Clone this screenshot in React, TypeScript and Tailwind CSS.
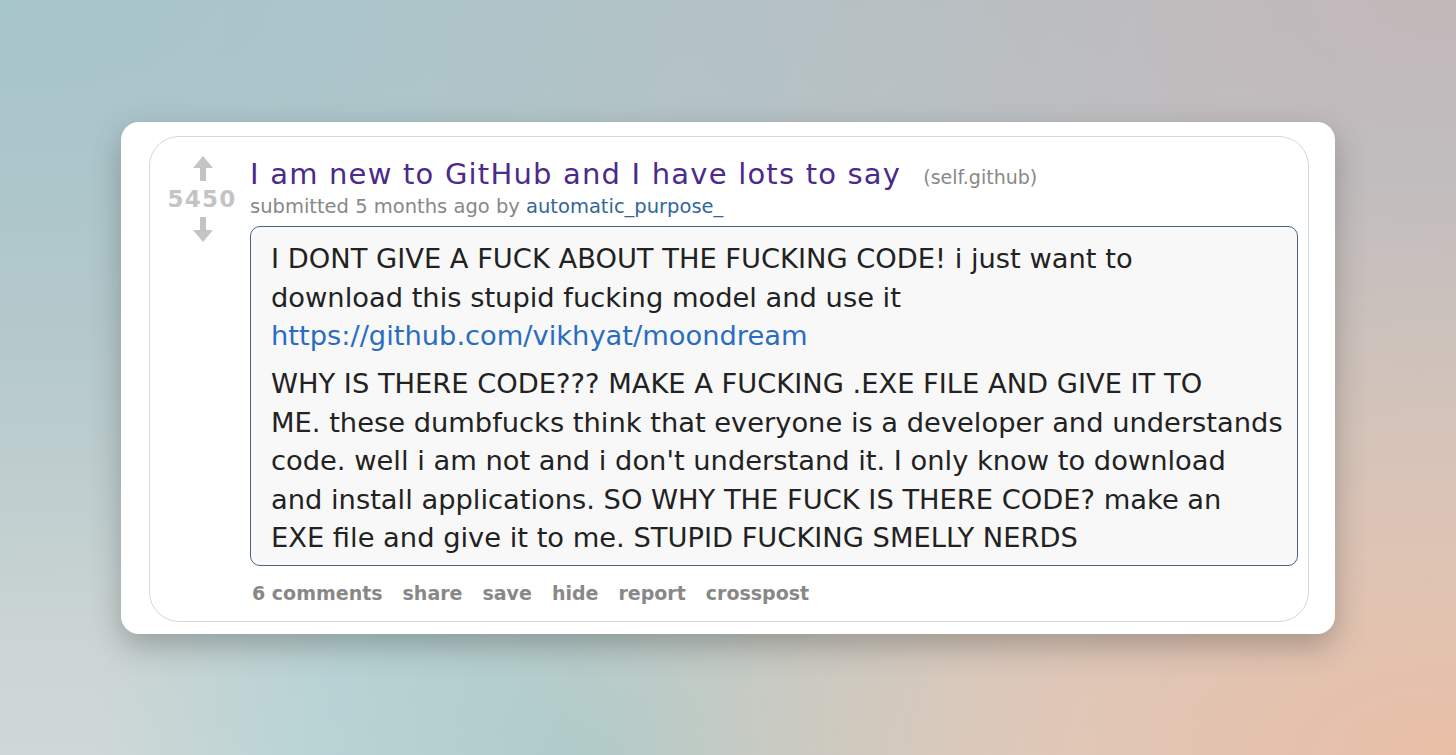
import React from "react";

function Arrow({ down = false }: { down?: boolean }) {
  return (
    <svg width="20" height="25" viewBox="0 0 20 25" className={down ? "rotate-180" : ""}>
      <path d="M10 0 L20 12 L13 12 L13 25 L7 25 L7 12 L0 12 Z" fill="#c4c4c4" />
    </svg>
  );
}

const para1 = [
  "I DONT GIVE A FUCK ABOUT THE FUCKING CODE! i just want to",
  "download this stupid fucking model and use it",
];
const para2 = [
  "WHY IS THERE CODE??? MAKE A FUCKING .EXE FILE AND GIVE IT TO",
  "ME. these dumbfucks think that everyone is a developer and understands",
  "code. well i am not and i don't understand it. I only know to download",
  "and install applications. SO WHY THE FUCK IS THERE CODE? make an",
  "EXE file and give it to me. STUPID FUCKING SMELLY NERDS",
];

export default function App() {
  return (
    <div className="w-[1456px] h-[755px] overflow-hidden flex items-center justify-center bg-[radial-gradient(ellipse_at_100%_100%,#e9bea6_0%,rgba(233,190,166,0)_55%),radial-gradient(ellipse_at_40%_100%,#a0cfd4_0%,rgba(160,207,212,0)_40%),radial-gradient(ellipse_at_0%_0%,#a6c5cb_0%,rgba(166,197,203,0)_60%),radial-gradient(ellipse_at_100%_0%,#c2b8ba_0%,rgba(194,184,186,0)_60%),linear-gradient(180deg,#b8c4c6_0%,#cfd8d6_100%)]" style={{ fontFamily: '"DejaVu Sans", Verdana, sans-serif' }}>
      <div className="w-[1214px] h-[512px] bg-white rounded-[18px] shadow-[0_12px_30px_rgba(60,60,60,0.35)] pl-[28px] pr-[26px] pt-[14px] pb-[12px] flex">
        <div className="flex-1 rounded-[30px] border border-[#cfd8df] flex pl-[10px] pr-[10px] pt-[18px]">
          <div className="w-[86px] flex flex-col items-center pt-[1px]">
            <Arrow />
            <div className="mt-[1px] text-[23px] font-bold text-[#c4c4c4] leading-[35px] tracking-[1.2px] pl-[2px] mr-[4px]">5450</div>
            <Arrow down />
          </div>
          <div className="flex-1 pl-[4px] flex flex-col">
            <div className="flex items-baseline mt-[2px]">
              <span className="text-[29px] leading-[34px] tracking-[1.2px] text-[#4b2a8c]">I am new to GitHub and I have lots to say</span>
              <span className="ml-[22px] text-[19px] text-[#888]">(self.github)</span>
            </div>
            <div className="text-[19.5px] leading-[22px] text-[#888] mt-[5px]">
              submitted 5 months ago by <span className="text-[#369]">automatic_purpose_</span>
            </div>
            <div className="mt-[8px] w-[1048px] h-[340px] border-[1.5px] border-[#4d6580] rounded-[10px] bg-[#f8f8f8] pl-[20px] pr-[8px] pt-[13px] text-[27.3px] leading-[38.5px] text-[#222]">
              <div>
                {para1.map((l) => (
                  <div key={l} className="whitespace-nowrap">{l}</div>
                ))}
                <div className="whitespace-nowrap text-[#2a6dc0]">https://github.com/vikhyat/moondream</div>
              </div>
              <div className="mt-[9.5px]">
                {para2.map((l) => (
                  <div key={l} className="whitespace-nowrap">{l}</div>
                ))}
              </div>
            </div>
            <div className="mt-[15px] flex gap-[20px] text-[19px] leading-[24px] font-bold text-[#888] pl-[2px]">
              <span>6 comments</span>
              <span>share</span>
              <span>save</span>
              <span>hide</span>
              <span>report</span>
              <span>crosspost</span>
            </div>
          </div>
        </div>
      </div>
    </div>
  );
}
